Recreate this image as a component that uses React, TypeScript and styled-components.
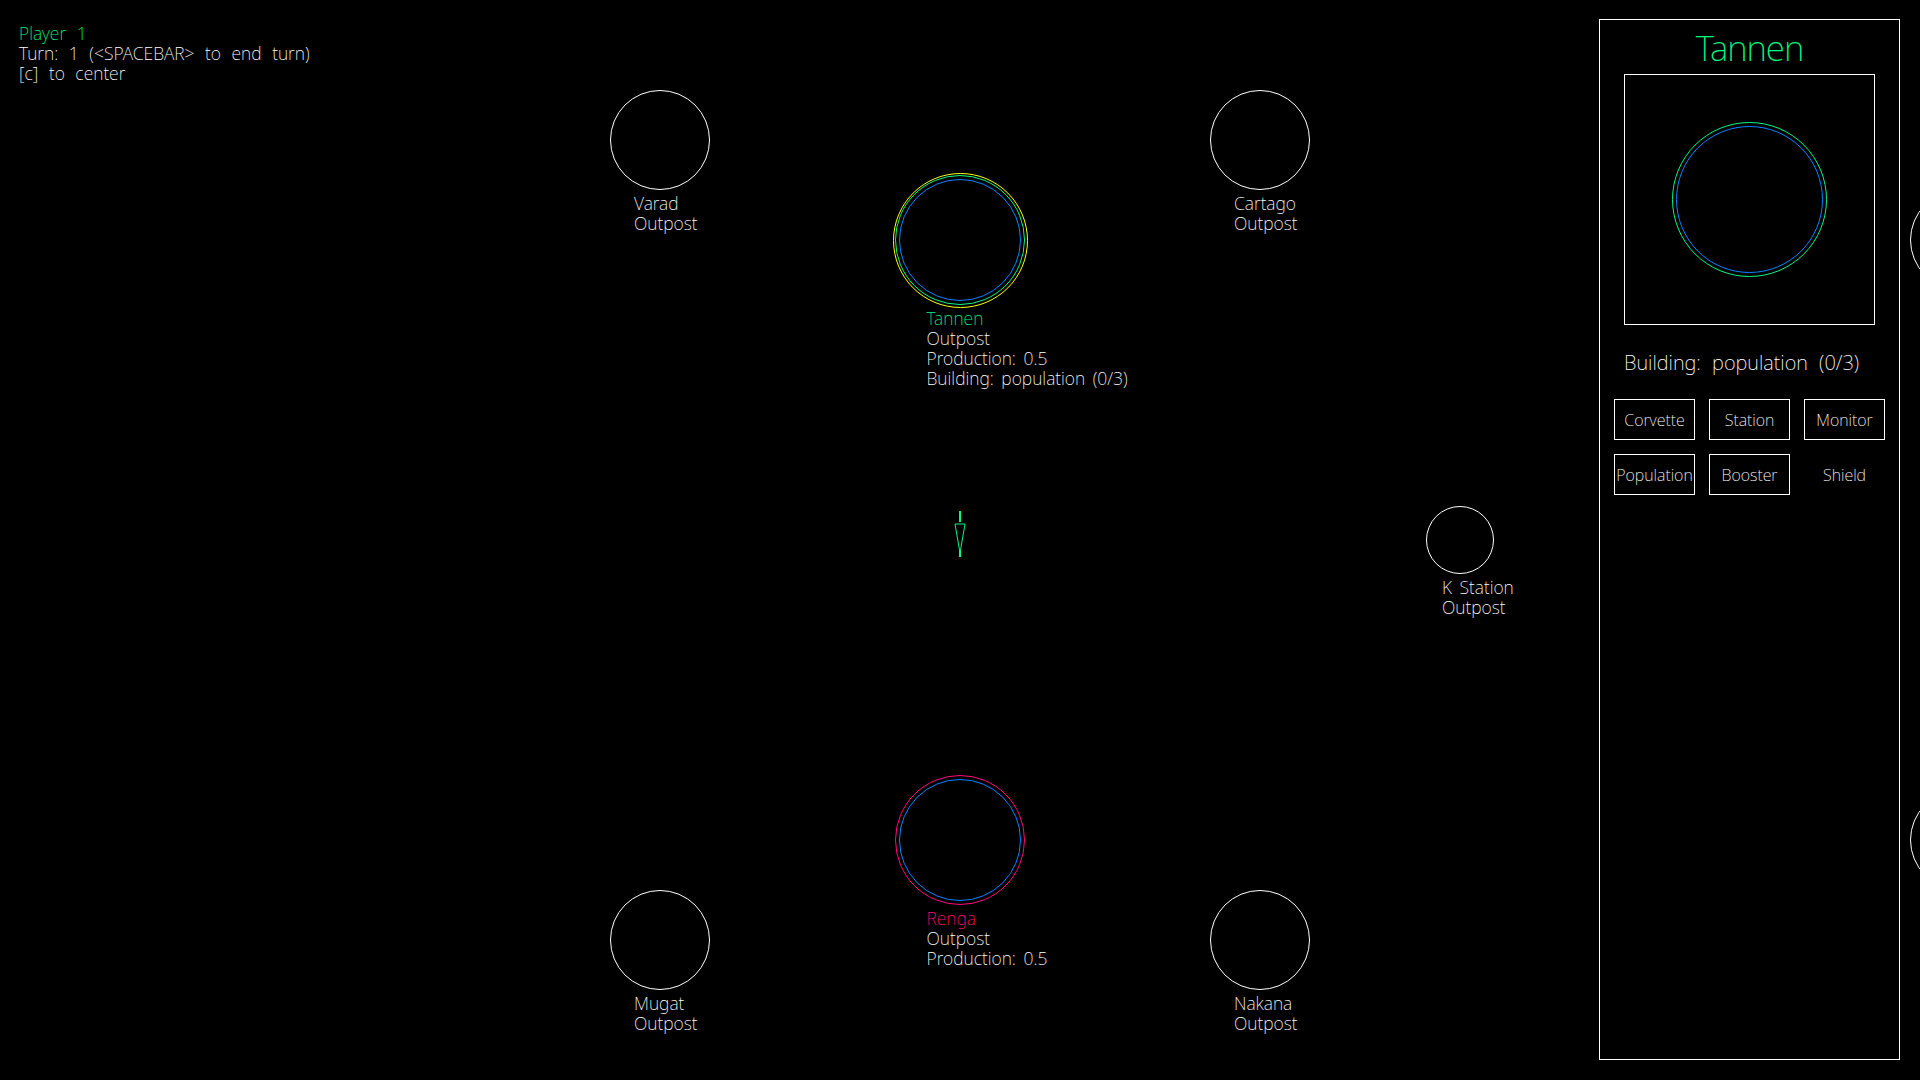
import styled, { createGlobalStyle } from 'styled-components';

const GREEN = '#00f880';
const BLUE = '#0a84ff';
const PINK = '#ff0a78';
const YELLOW = '#ffff00';

type RingDef = { r: number; color: string };

type PlanetDef = {
	name: string;
	x: number;
	y: number;
	rings: RingDef[];
	labelR: number;
	nameColor?: string;
	lines: string[];
};

const planets: PlanetDef[] = [
	{ name: 'Varad', x: 660, y: 140, rings: [{ r: 50, color: '#fff' }], labelR: 50, lines: ['Outpost'] },
	{ name: 'Cartago', x: 1260, y: 140, rings: [{ r: 50, color: '#fff' }], labelR: 50, lines: ['Outpost'] },
	{
		name: 'Tannen',
		x: 960,
		y: 240,
		rings: [
			{ r: 67.5, color: YELLOW },
			{ r: 65, color: GREEN },
			{ r: 61, color: BLUE },
		],
		labelR: 65,
		nameColor: GREEN,
		lines: ['Outpost', 'Production: 0.5', 'Building: population (0/3)'],
	},
	{ name: 'K Station', x: 1460, y: 540, rings: [{ r: 34, color: '#fff' }], labelR: 34, lines: ['Outpost'] },
	{
		name: 'Renga',
		x: 960,
		y: 840,
		rings: [
			{ r: 65, color: PINK },
			{ r: 61, color: BLUE },
		],
		labelR: 65,
		nameColor: PINK,
		lines: ['Outpost', 'Production: 0.5'],
	},
	{ name: 'Mugat', x: 660, y: 940, rings: [{ r: 50, color: '#fff' }], labelR: 50, lines: ['Outpost'] },
	{ name: 'Nakana', x: 1260, y: 940, rings: [{ r: 50, color: '#fff' }], labelR: 50, lines: ['Outpost'] },
	{ name: '', x: 1960, y: 240, rings: [{ r: 50, color: '#fff' }], labelR: 50, lines: [] },
	{ name: '', x: 1960, y: 840, rings: [{ r: 50, color: '#fff' }], labelR: 50, lines: [] },
];

const builds = ['Corvette', 'Station', 'Monitor', 'Population', 'Booster', 'Shield'];

const Planet = ({ p }: { p: PlanetDef }) => {
	const outer = Math.max(...p.rings.map((r) => r.r));
	return (
		<PlanetSpot style={{ left: p.x - outer, top: p.y - outer }}>
			<Disc $size={outer * 2}>
				{p.rings.map((ring) => (
					<Ring key={ring.r} $r={ring.r} $outer={outer} $color={ring.color} />
				))}
			</Disc>
			{p.name && (
				<Label style={{ marginLeft: outer - p.labelR / 2 - 1, marginTop: p.labelR - outer + 3 }}>
					<LabelLine $color={p.nameColor}>{p.name}</LabelLine>
					{p.lines.map((l) => (
						<LabelLine key={l}>{l}</LabelLine>
					))}
				</Label>
			)}
		</PlanetSpot>
	);
};

const App = () => {
	return (
		<>
			<GlobalStyle />
			<Map>
				<Hud>
					<HudLine $color={GREEN}>Player 1</HudLine>
					<HudLine>Turn: 1 (&lt;SPACEBAR&gt; to end turn)</HudLine>
					<HudLine>[c] to center</HudLine>
				</Hud>

				{planets.map((p) => (
					<Planet key={`${p.x}-${p.y}`} p={p} />
				))}

				<Ship width='14' height='48' viewBox='0 0 14 48'>
					<line x1='7' y1='0' x2='7' y2='11' stroke={GREEN} strokeWidth='2' />
					<polygon points='2,13 12,13 7,42' fill='none' stroke={GREEN} strokeWidth='1' />
					<line x1='7' y1='40' x2='7' y2='46' stroke={GREEN} strokeWidth='2' />
				</Ship>

				<Panel>
					<Title>Tannen</Title>
					<Preview>
						<PreviewRing $r={77.5} $color={GREEN} />
						<PreviewRing $r={73.5} $color={BLUE} />
					</Preview>
					<Building>Building: population (0/3)</Building>
					<BuildGrid>
						{builds.map((b) => (
							<BuildButton key={b} $plain={b === 'Shield'}>
								{b}
							</BuildButton>
						))}
					</BuildGrid>
				</Panel>
			</Map>
		</>
	);
};

const GlobalStyle = createGlobalStyle`
	html, body {
		margin: 0;
		padding: 0;
		background: #000;
		overflow: hidden;
	}
	body {
		font-family: 'Noto Sans', 'Liberation Sans', sans-serif;
		font-weight: 200;
		color: #fff;
	}
`;

const Map = styled.div`
	position: relative;
	width: 1920px;
	height: 1080px;
	background: #000;
	overflow: hidden;
`;

const Hud = styled.div`
	position: absolute;
	left: 19px;
	top: 23px;
	font-size: 17.5px;
	line-height: 20px;
	word-spacing: 6px;
`;

const HudLine = styled.div<{ $color?: string }>`
	color: ${(p) => p.$color || '#fff'};
	white-space: pre;
`;

const PlanetSpot = styled.div`
	position: absolute;
	display: flex;
	flex-direction: column;
	align-items: flex-start;
`;

const Disc = styled.div<{ $size: number }>`
	position: relative;
	width: ${(p) => p.$size}px;
	height: ${(p) => p.$size}px;
`;

const Ring = styled.div<{ $r: number; $outer: number; $color: string }>`
	position: absolute;
	left: ${(p) => p.$outer - p.$r}px;
	top: ${(p) => p.$outer - p.$r}px;
	width: ${(p) => p.$r * 2}px;
	height: ${(p) => p.$r * 2}px;
	box-sizing: border-box;
	border: 1px solid ${(p) => p.$color};
	border-radius: 50%;
`;

const Label = styled.div`
	font-size: 17.5px;
	line-height: 20px;
	word-spacing: 3px;
	white-space: pre;
`;

const LabelLine = styled.div<{ $color?: string }>`
	color: ${(p) => p.$color || '#fff'};
`;

const Ship = styled.svg`
	position: absolute;
	left: 953px;
	top: 511px;
`;

const Panel = styled.aside`
	position: absolute;
	left: 1599px;
	top: 19px;
	width: 301px;
	height: 1041px;
	box-sizing: border-box;
	border: 1px solid #fff;
	background: #000;
	display: flex;
	flex-direction: column;
	align-items: center;
`;

const Title = styled.div`
	padding-top: 8px;
	font-size: 35px;
	line-height: 40px;
	letter-spacing: -1px;
	color: ${GREEN};
`;

const Preview = styled.div`
	position: relative;
	margin-top: 6px;
	width: 251px;
	height: 251px;
	box-sizing: border-box;
	border: 1px solid #fff;
	display: flex;
	align-items: center;
	justify-content: center;
`;

const PreviewRing = styled.div<{ $r: number; $color: string }>`
	position: absolute;
	width: ${(p) => p.$r * 2}px;
	height: ${(p) => p.$r * 2}px;
	box-sizing: border-box;
	border: 1px solid ${(p) => p.$color};
	border-radius: 50%;
`;

const Building = styled.div`
	align-self: stretch;
	margin-top: 26px;
	padding-left: 24px;
	font-size: 20px;
	line-height: 24px;
	word-spacing: 6px;
	white-space: nowrap;
`;

const BuildGrid = styled.div`
	margin-top: 24px;
	display: grid;
	grid-template-columns: repeat(3, 81px);
	grid-auto-rows: 41px;
	gap: 14px;
`;

const BuildButton = styled.div<{ $plain?: boolean }>`
	box-sizing: border-box;
	border: 1px solid ${(p) => (p.$plain ? 'transparent' : '#fff')};
	display: flex;
	align-items: center;
	justify-content: center;
	font-size: 16px;
	white-space: nowrap;
	overflow: hidden;
`;

export default App;
